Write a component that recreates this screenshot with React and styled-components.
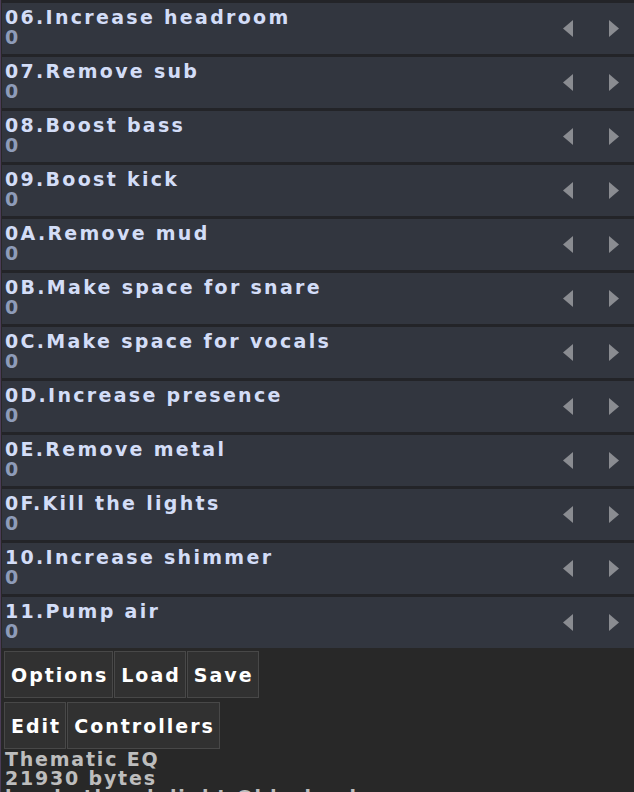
import React from "react";
import styled, { createGlobalStyle } from "styled-components";

const GlobalStyle = createGlobalStyle`
  html, body {
    margin: 0;
    padding: 0;
    background: #282828;
    overflow: hidden;
  }
  body {
    font-family: "DejaVu Sans", "Liberation Sans", sans-serif;
  }
`;

const Page = styled.div`
  border-left: 1px solid #4b3c57;
  padding-left: 1px;
  min-height: 792px;
  background: #282828;
`;

const List = styled.div`
  display: flex;
  flex-direction: column;
  gap: 3px;
  padding-top: 3px;
  background: #232428;
`;

const Row = styled.div`
  display: flex;
  align-items: center;
  height: 51px;
  background: #32363f;
  padding-left: 3px;
`;

const Info = styled.div`
  flex: 1;
  display: flex;
  flex-direction: column;
  font-weight: bold;
  font-size: 19px;
  line-height: 20px;
  letter-spacing: 2.3px;
  align-self: flex-start;
  padding-top: 4px;
`;

const Title = styled.div`
  color: #d3ddf7;
  white-space: nowrap;
`;

const Value = styled.div`
  color: #8e9cb9;
`;

const Arrows = styled.div`
  display: flex;
  align-items: center;
  gap: 36px;
  padding-right: 15px;
`;

const Arrow = styled.svg`
  width: 10px;
  height: 17px;
  display: block;
  fill: #8a8c91;
`;

const Buttons = styled.div`
  display: flex;
  gap: 1px;
  margin: ${(p) => p.$top}px 0 0 2px;
`;

const Button = styled.div`
  display: flex;
  align-items: center;
  height: 45px;
  padding: 0 4px 0 6px;
  background: #313131;
  border: 1px solid #484848;
  color: #ffffff;
  font-weight: bold;
  font-size: 19px;
  letter-spacing: 2px;
  white-space: nowrap;
`;

const Footer = styled.div`
  margin: 1px 0 0 3px;
  color: #bdbdbd;
  font-weight: bold;
  font-size: 19px;
  line-height: 19px;
  letter-spacing: 1.8px;
  white-space: nowrap;
`;

const presets = [
  "06.Increase headroom",
  "07.Remove sub",
  "08.Boost bass",
  "09.Boost kick",
  "0A.Remove mud",
  "0B.Make space for snare",
  "0C.Make space for vocals",
  "0D.Increase presence",
  "0E.Remove metal",
  "0F.Kill the lights",
  "10.Increase shimmer",
  "11.Pump air",
];

const LeftArrow = () => (
  <Arrow viewBox="0 0 10 17">
    <polygon points="10,0 10,17 0,8.5" />
  </Arrow>
);

const RightArrow = () => (
  <Arrow viewBox="0 0 10 17">
    <polygon points="0,0 0,17 10,8.5" />
  </Arrow>
);

export default function App() {
  return (
    <Page>
      <GlobalStyle />
      <List>
        {presets.map((name) => (
          <Row key={name}>
            <Info>
              <Title>{name}</Title>
              <Value>0</Value>
            </Info>
            <Arrows>
              <LeftArrow />
              <RightArrow />
            </Arrows>
          </Row>
        ))}
      </List>
      <Buttons $top={3}>
        <Button>Options</Button>
        <Button>Load</Button>
        <Button>Save</Button>
      </Buttons>
      <Buttons $top={4}>
        <Button>Edit</Button>
        <Button>Controllers</Button>
      </Buttons>
      <Footer>
        <div>Thematic EQ</div>
        <div>21930 bytes</div>
        <div>by rhythm delight Oldschool</div>
      </Footer>
    </Page>
  );
}
